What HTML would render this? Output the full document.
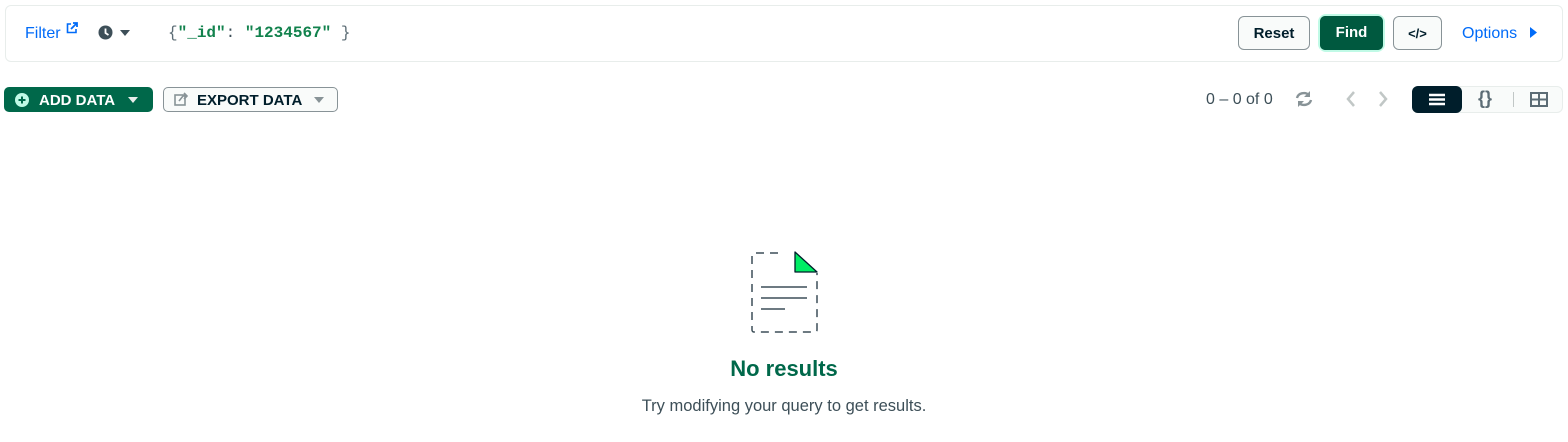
<!DOCTYPE html>
<html><head><style>
body{margin:0;width:1568px;height:442px;background:#fff;font-family:"Liberation Sans",sans-serif;position:relative;overflow:hidden;color:#001e2b}
.a{position:absolute}
.bar{left:5px;top:5px;width:1558px;height:57px;border:1px solid #e8edeb;border-radius:6px;box-sizing:border-box}
.btn{position:absolute;top:16px;height:34px;border:1px solid #889397;border-radius:6px;background:#f9fbfa;box-sizing:border-box;font-weight:bold;font-size:15px;display:flex;align-items:center;justify-content:center}
</style></head><body>
<div class="a bar"></div>
<div class="a" style="left:25px;top:25px;font-size:16px;color:#016bf8">Filter</div>
<svg class="a" style="left:66px;top:22px" width="12" height="12" viewBox="0 0 12 12"><path d="M5 2H1.5v8.5H10V7" fill="none" stroke="#016bf8" stroke-width="1.6"/><path d="M5 7l6-6M7 1h4v4" stroke="#016bf8" stroke-width="1.8" fill="none"/></svg>
<svg class="a" style="left:98px;top:25px" width="36" height="16"><circle cx="7.5" cy="7.5" r="7" fill="#3d4f58"/><path d="M7.5 3.5V8l3 2" stroke="#fff" stroke-width="1.8" fill="none"/><path d="M22 5h10l-5 6z" fill="#3d4f58"/></svg>
<div class="a" style="left:168px;top:24px;font-family:'Liberation Mono',monospace;font-size:16px;color:#5c6c75">{<b style="color:#12824d">"_id"</b><span style="color:#3d4f58">:</span> <b style="color:#12824d">"1234567"</b> }</div>
<div class="btn" style="left:1238px;width:72px">Reset</div>
<div class="btn" style="left:1318px;top:14px;width:67px;height:38px;border:2px solid #c0fae6;background:#00593f;color:#fff;border-radius:8px"><span style="background:#00593f;border-radius:5px;display:block;line-height:34px;width:63px;text-align:center">Find</span></div>
<div class="btn" style="left:1393px;width:49px;font-size:13px">&lt;/&gt;</div>
<div class="a" style="left:1462px;top:25px;font-size:16px;color:#016bf8">Options</div>
<svg class="a" style="left:1530px;top:27px" width="8" height="12"><path d="M0 0l7 5.5L0 11z" fill="#016bf8"/></svg>

<div class="a" style="left:4px;top:87px;width:149px;height:25px;background:#00684a;border-radius:5px"></div>
<svg class="a" style="left:14px;top:92px" width="16" height="16"><circle cx="8" cy="8" r="7" fill="#c0fae6"/><path d="M8 4.5v7M4.5 8h7" stroke="#00684a" stroke-width="2"/></svg>
<div class="a" style="left:39px;top:92px;color:#fff;font-weight:bold;font-size:15px">ADD DATA</div>
<svg class="a" style="left:128px;top:97px" width="10" height="6"><path d="M0 0h10L5 6z" fill="#e8edeb"/></svg>
<div class="a" style="left:163px;top:87px;width:175px;height:25px;border:1px solid #889397;border-radius:5px;box-sizing:border-box;background:#f9fbfa"></div>
<svg class="a" style="left:174px;top:92px" width="14" height="14"><rect x="1" y="3" width="10" height="10" fill="none" stroke="#889397" stroke-width="1.6"/><path d="M5 9l4-5h4M10 1l3 3-3 3" stroke="#889397" stroke-width="1.6" fill="none"/></svg>
<div class="a" style="left:197px;top:92px;font-weight:bold;font-size:15px">EXPORT DATA</div>
<svg class="a" style="left:314px;top:97px" width="10" height="6"><path d="M0 0h10L5 6z" fill="#889397"/></svg>

<div class="a" style="left:1206px;top:91px;font-size:16px;color:#3d4f58">0 – 0 of 0</div>
<svg class="a" style="left:1294px;top:90px" width="20" height="18"><path d="M3 8a7 6 0 0 1 12-3M17 10a7 6 0 0 1-12 3" stroke="#889397" stroke-width="2.4" fill="none"/><path d="M16 1v6h-6zM4 17v-6h6z" fill="#889397"/></svg>
<svg class="a" style="left:1342px;top:90px" width="50" height="18"><path d="M12 2L6 9l6 7M38 2l6 7-6 7" stroke="#c1c7c6" stroke-width="2.5" fill="none"/></svg>
<div class="a" style="left:1412px;top:86px;width:151px;height:27px;background:#f9fbfa;border:1px solid #e8edeb;border-radius:6px;box-sizing:border-box"></div>
<div class="a" style="left:1412px;top:86px;width:50px;height:27px;background:#001e2b;border-radius:6px"></div>
<svg class="a" style="left:1429px;top:93px" width="16" height="13"><path d="M0 2h16M0 6.5h16M0 11h16" stroke="#fff" stroke-width="2.4"/></svg>
<div class="a" style="left:1478px;top:88px;font-weight:bold;font-size:18px;color:#5c6c75">{}</div>
<div class="a" style="left:1513px;top:92px;width:1px;height:15px;background:#c1c7c6"></div>
<svg class="a" style="left:1530px;top:92px" width="18" height="15"><rect x="1" y="1" width="16" height="13" fill="none" stroke="#5c6c75" stroke-width="2"/><path d="M9 1v13M1 7.5h16" stroke="#5c6c75" stroke-width="2"/></svg>

<svg class="a" style="left:748px;top:249px" width="72" height="86"><path d="M30 4H6a2 2 0 0 0-2 2v75a2 2 0 0 0 2 2h61a2 2 0 0 0 2-2V24" stroke="#3d4f58" stroke-width="1.5" fill="none" stroke-dasharray="8 6"/><path d="M47 3v20h22z" fill="#00ed64" stroke="#001e2b" stroke-width="1.3" stroke-linejoin="round"/><path d="M13 38h46M13 49h46M13 60h24" stroke="#3d4f58" stroke-width="1.5"/></svg>
<div class="a" style="left:0;width:1568px;top:356px;text-align:center;font-size:22px;font-weight:bold;color:#00684a">No results</div>
<div class="a" style="left:0;width:1568px;top:397px;text-align:center;font-size:16.5px;color:#3d4f58">Try modifying your query to get results.</div>
</body></html>
